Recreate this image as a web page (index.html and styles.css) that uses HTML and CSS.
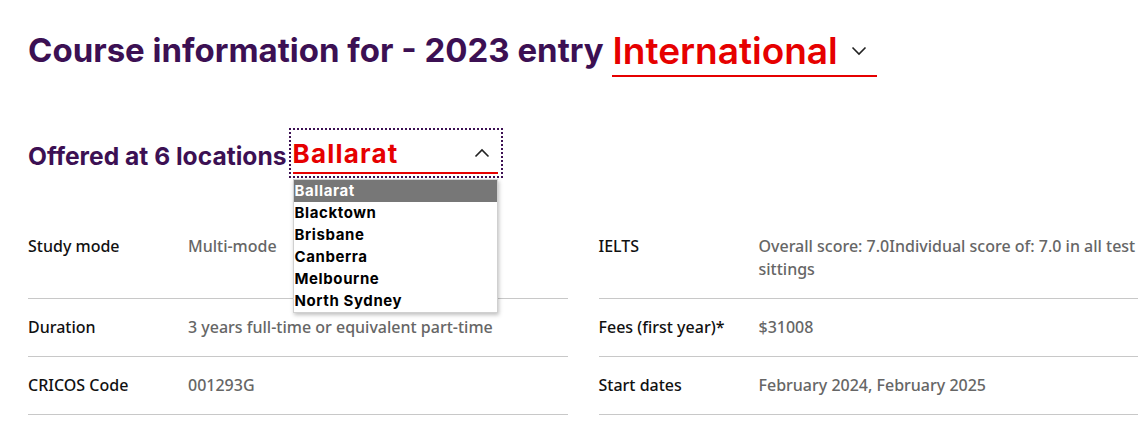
FILE: index.html
```html
<!DOCTYPE html>
<html lang="en">
<head>
<meta charset="utf-8">
<title>Course information</title>
<link rel="stylesheet" href="styles.css">
</head>
<body>
<main class="page">
  <h1 class="title">
    <span class="title-text">Course information for - 2023 entry</span>
    <span class="audience-select">
      <span class="audience-value">International</span>
      <svg class="chev" width="16" height="10" viewBox="0 0 16 10"><path d="M1.5 1.5 L8 8 L14.5 1.5" fill="none" stroke="#222" stroke-width="1.6"/></svg>
    </span>
  </h1>

  <div class="locations">
    <h2 class="loc-title">Offered at 6 locations</h2>
    <div class="loc-select">
      <div class="loc-current">
        <span class="loc-value">Ballarat</span>
        <svg class="chev" width="16" height="10" viewBox="0 0 16 10"><path d="M1.5 8.5 L8 2 L14.5 8.5" fill="none" stroke="#222" stroke-width="1.6"/></svg>
      </div>
      <ul class="loc-list">
        <li class="loc-option is-active">Ballarat</li>
        <li class="loc-option">Blacktown</li>
        <li class="loc-option">Brisbane</li>
        <li class="loc-option">Canberra</li>
        <li class="loc-option">Melbourne</li>
        <li class="loc-option">North Sydney</li>
      </ul>
    </div>
  </div>

  <dl class="facts">
    <div class="fact"><dt>Study mode</dt><dd>Multi-mode</dd></div>
    <div class="fact"><dt>IELTS</dt><dd>Overall score: 7.0Individual score of: 7.0 in all test sittings</dd></div>
    <div class="fact"><dt>Duration</dt><dd>3 years full-time or equivalent part-time</dd></div>
    <div class="fact"><dt>Fees (first year)*</dt><dd>$31008</dd></div>
    <div class="fact"><dt>CRICOS Code</dt><dd>001293G</dd></div>
    <div class="fact"><dt>Start dates</dt><dd>February 2024, February 2025</dd></div>
  </dl>
</main>
</body>
</html>
```

FILE: styles.css
```css
* { box-sizing: border-box; }
html, body { margin: 0; padding: 0; background: #fff; }
body { font-family: "Inter", "Noto Sans", sans-serif; }

.page {
  padding: 30px 8px 0 28px;
}

.title {
  margin: 0;
  display: flex;
  align-items: flex-end;
  gap: 8px;
  color: #3c1053;
  font-size: 33px;
  font-weight: 700;
  line-height: 40px;
}
.title-text { padding-bottom: 7px; }

.audience-select {
  display: flex;
  align-items: center;
  width: 265px;
  border-bottom: 2px solid #e60000;
  padding: 0 10px 4px 1px;
  justify-content: space-between;
}
.audience-value {
  color: #e60000;
  font-size: 37px;
  font-weight: 600;
  line-height: 40px;
}

.locations {
  margin-top: 51px;
  display: flex;
  align-items: flex-start;
  gap: 2px;
}
.loc-title {
  margin: 13px 0 0;
  color: #3c1053;
  font-size: 24.6px;
  font-weight: 700;
  line-height: 30px;
}
.loc-select {
  position: relative;
  width: 214px;
  height: 50px;
  outline: 2px dotted #3c1053;
  outline-offset: -2px;
  padding: 4px 5px 0 4px;
}
.loc-current {
  display: flex;
  align-items: center;
  justify-content: space-between;
  border-bottom: 2px solid #e60000;
  height: 42px;
  padding: 2px 8px 0 0;
}
.loc-value {
  color: #e60000;
  font-size: 26px;
  font-weight: 700;
  letter-spacing: 1.2px;
}
.loc-list {
  position: absolute;
  top: 51px;
  left: 4px;
  width: 205px;
  margin: 0;
  padding: 0;
  list-style: none;
  background: #fff;
  border: 1px solid #d0d0d0;
  box-shadow: 1px 2px 4px rgba(0,0,0,0.25);
  z-index: 5;
}
.loc-option {
  height: 22px;
  line-height: 22px;
  padding-left: 1px;
  font-size: 15px;
  font-weight: 700;
  letter-spacing: 0.6px;
  color: #000;
}
.loc-option.is-active {
  background: #777;
  color: #fff;
}

.facts {
  margin: 40px 0 0;
  display: grid;
  grid-template-columns: 1fr 1fr;
  column-gap: 31px;
}
.fact {
  display: flex;
  padding: 17px 0;
  border-bottom: 1px solid #c8c8c8;
  font-family: "Noto Sans", "Open Sans", sans-serif;
  font-size: 16px;
  line-height: 23px;
}
.fact dt {
  width: 160px;
  flex: none;
  color: #111;
  font-weight: 500;
}
.fact dd {
  margin: 0;
  color: #666;
  font-weight: 500;
}
```
